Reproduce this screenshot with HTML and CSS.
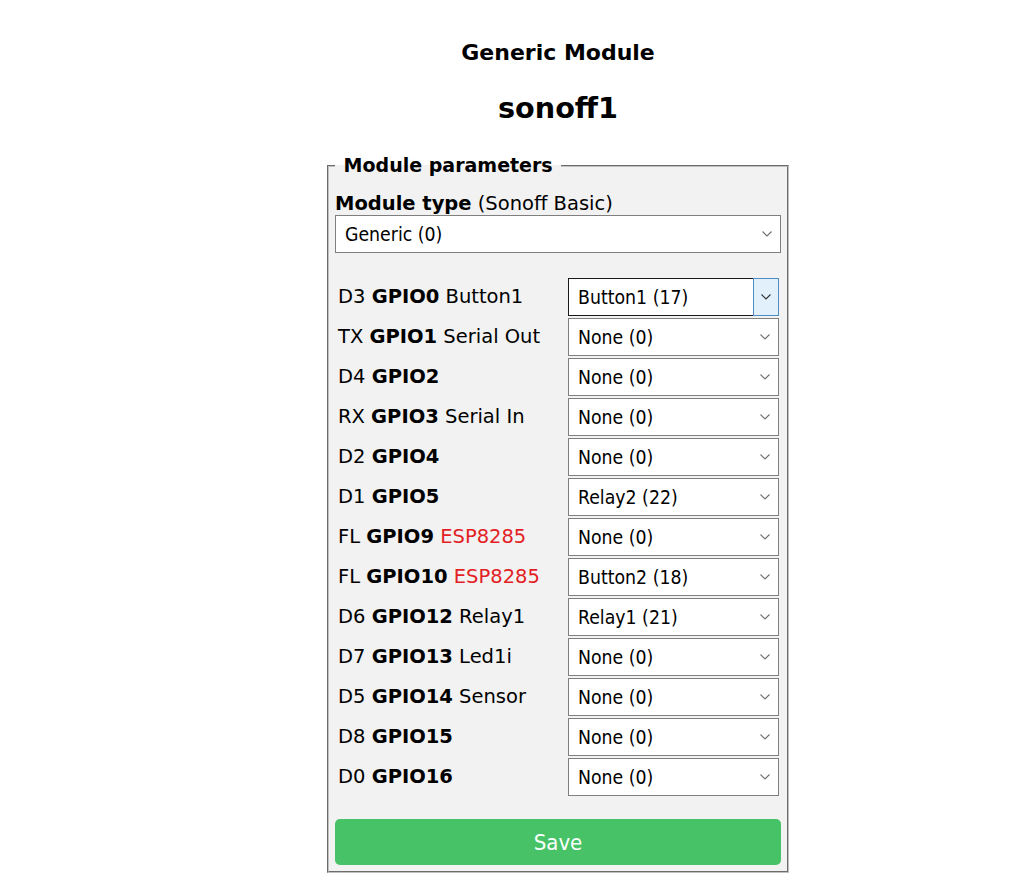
FILE: index.html
```html
<!DOCTYPE html>
<html lang="en">
<head>
<meta charset="utf-8">
<title>Configure Module</title>
<link rel="stylesheet" href="styles.css">
</head>
<body>
<div class="page">
  <h3 class="module-title">Generic Module</h3>
  <h2 class="device-name">sonoff1</h2>
  <fieldset class="params">
    <legend class="params-legend"><b>&nbsp;Module parameters&nbsp;</b></legend>
    <form class="params-form">
      <div class="type-label"><b>Module type</b> (Sonoff Basic)</div>
      <div class="sel"><select><option>Generic (0)</option></select><svg class="chev" width="10" height="6" viewBox="0 0 10 6"><polyline points="0.5,0.5 5,5 9.5,0.5"/></svg></div>
      <div class="gpio-grid">
        <div class="gpio-label">D3 <b>GPIO0</b> Button1</div>
        <div class="sel sel-hover"><select><option>Button1 (17)</option></select><span class="drop"><svg class="chev" width="10" height="6" viewBox="0 0 10 6"><polyline points="0.5,0.5 5,5 9.5,0.5"/></svg></span></div>

        <div class="gpio-label">TX <b>GPIO1</b> Serial Out</div>
        <div class="sel"><select><option>None (0)</option></select><svg class="chev" width="10" height="6" viewBox="0 0 10 6"><polyline points="0.5,0.5 5,5 9.5,0.5"/></svg></div>

        <div class="gpio-label">D4 <b>GPIO2</b></div>
        <div class="sel"><select><option>None (0)</option></select><svg class="chev" width="10" height="6" viewBox="0 0 10 6"><polyline points="0.5,0.5 5,5 9.5,0.5"/></svg></div>

        <div class="gpio-label">RX <b>GPIO3</b> Serial In</div>
        <div class="sel"><select><option>None (0)</option></select><svg class="chev" width="10" height="6" viewBox="0 0 10 6"><polyline points="0.5,0.5 5,5 9.5,0.5"/></svg></div>

        <div class="gpio-label">D2 <b>GPIO4</b></div>
        <div class="sel"><select><option>None (0)</option></select><svg class="chev" width="10" height="6" viewBox="0 0 10 6"><polyline points="0.5,0.5 5,5 9.5,0.5"/></svg></div>

        <div class="gpio-label">D1 <b>GPIO5</b></div>
        <div class="sel"><select><option>Relay2 (22)</option></select><svg class="chev" width="10" height="6" viewBox="0 0 10 6"><polyline points="0.5,0.5 5,5 9.5,0.5"/></svg></div>

        <div class="gpio-label">FL <b>GPIO9</b> <span class="warn">ESP8285</span></div>
        <div class="sel"><select><option>None (0)</option></select><svg class="chev" width="10" height="6" viewBox="0 0 10 6"><polyline points="0.5,0.5 5,5 9.5,0.5"/></svg></div>

        <div class="gpio-label">FL <b>GPIO10</b> <span class="warn">ESP8285</span></div>
        <div class="sel"><select><option>Button2 (18)</option></select><svg class="chev" width="10" height="6" viewBox="0 0 10 6"><polyline points="0.5,0.5 5,5 9.5,0.5"/></svg></div>

        <div class="gpio-label">D6 <b>GPIO12</b> Relay1</div>
        <div class="sel"><select><option>Relay1 (21)</option></select><svg class="chev" width="10" height="6" viewBox="0 0 10 6"><polyline points="0.5,0.5 5,5 9.5,0.5"/></svg></div>

        <div class="gpio-label">D7 <b>GPIO13</b> Led1i</div>
        <div class="sel"><select><option>None (0)</option></select><svg class="chev" width="10" height="6" viewBox="0 0 10 6"><polyline points="0.5,0.5 5,5 9.5,0.5"/></svg></div>

        <div class="gpio-label">D5 <b>GPIO14</b> Sensor</div>
        <div class="sel"><select><option>None (0)</option></select><svg class="chev" width="10" height="6" viewBox="0 0 10 6"><polyline points="0.5,0.5 5,5 9.5,0.5"/></svg></div>

        <div class="gpio-label">D8 <b>GPIO15</b></div>
        <div class="sel"><select><option>None (0)</option></select><svg class="chev" width="10" height="6" viewBox="0 0 10 6"><polyline points="0.5,0.5 5,5 9.5,0.5"/></svg></div>

        <div class="gpio-label">D0 <b>GPIO16</b></div>
        <div class="sel"><select><option>None (0)</option></select><svg class="chev" width="10" height="6" viewBox="0 0 10 6"><polyline points="0.5,0.5 5,5 9.5,0.5"/></svg></div>
      </div>
      <button type="button" class="save">Save</button>
    </form>
  </fieldset>
</div>
</body>
</html>
```

FILE: styles.css
```css
html, body {
  margin: 0;
  padding: 0;
  background: #ffffff;
}

body {
  font-family: "DejaVu Sans", Verdana, sans-serif;
  font-size: 19.5px;
  color: #000000;
}

.page {
  padding-left: 84px;
  display: flex;
  flex-direction: column;
  align-items: center;
}

.module-title {
  margin: 40px 0 0;
  font-size: 22px;
  line-height: 26px;
  font-weight: bold;
}

.device-name {
  margin: 25px 0 0;
  font-size: 28.7px;
  line-height: 35px;
  font-weight: bold;
}

.params {
  margin: 28px 0 0;
  padding: 6px;
  width: 446px;
  border: 2px groove #c0c0c0;
  background: #f2f2f2;
  min-inline-size: auto;
}

.params-legend {
  padding: 0 2px;
  font-size: 19px;
  line-height: 23px;
}

.params-form {
  display: flex;
  flex-direction: column;
}

.type-label {
  margin-top: 9px;
  line-height: 23px;
}

.sel {
  position: relative;
  height: 38px;
}

.sel select {
  -webkit-appearance: none;
  appearance: none;
  display: block;
  width: 100%;
  height: 38px;
  box-sizing: border-box;
  margin: 0;
  padding: 0 30px 0 9px;
  border: 1px solid #7f7f7f;
  border-radius: 0;
  background: #ffffff;
  color: #000000;
  font-family: "DejaVu Sans Condensed", "Liberation Sans", Arial, sans-serif;
  font-size: 19.3px;
  outline: none;
}

.sel .chev {
  position: absolute;
  right: 9px;
  top: 16px;
  fill: none;
  stroke: #707070;
  stroke-width: 1.1;
  pointer-events: none;
}

.sel-hover select {
  border-color: #1a1a1a;
}

.sel-hover .drop {
  position: absolute;
  right: 0;
  top: 0;
  bottom: 0;
  width: 26px;
  box-sizing: border-box;
  border: 1px solid #4d8dc4;
  background: #e2f0fc;
  pointer-events: none;
}

.sel-hover .drop .chev {
  right: 7px;
  top: 15px;
  stroke: #303030;
}

.gpio-grid {
  margin-top: 25px;
  display: grid;
  grid-template-columns: 233px 211px;
  grid-auto-rows: 38px;
  row-gap: 2px;
}

.gpio-label {
  padding-left: 3px;
  line-height: 38px;
  white-space: nowrap;
}

.warn {
  color: #e31e24;
}

.save {
  margin-top: 23px;
  height: 46px;
  width: 100%;
  border: 0;
  border-radius: 5px;
  background: #47c266;
  color: #fbfffd;
  font-family: "DejaVu Sans Condensed", "Liberation Sans", Arial, sans-serif;
  font-size: 22px;
  cursor: pointer;
}
```
